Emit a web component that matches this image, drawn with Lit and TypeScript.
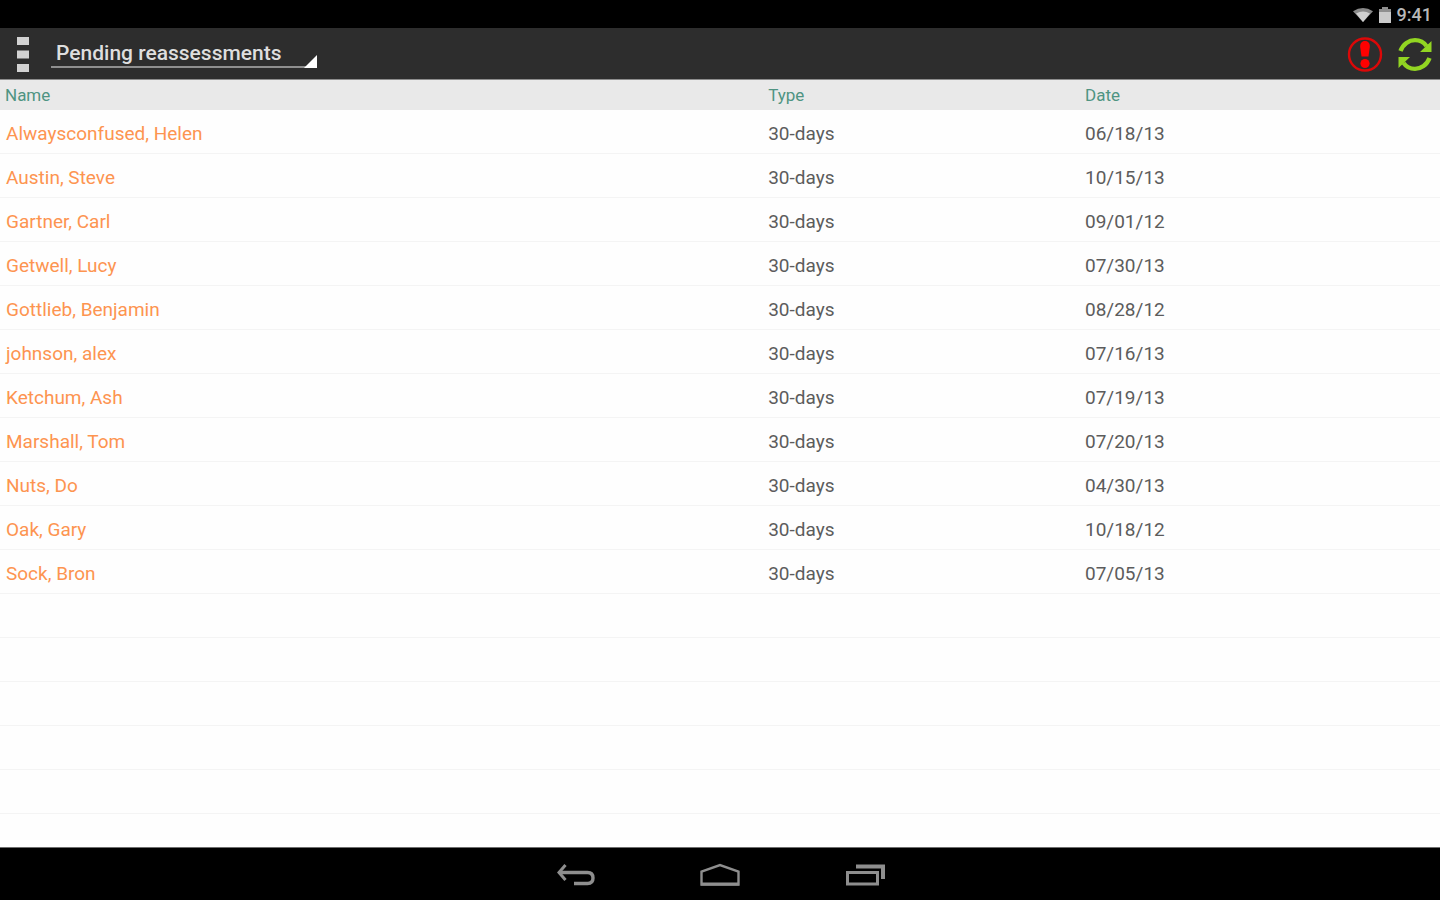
import { LitElement, html, css } from "lit";
import { customElement, state } from "lit/decorators.js";

interface Assessment {
  name: string;
  type: string;
  date: string;
}

const ROWS: Assessment[] = [
  { name: "Alwaysconfused, Helen", type: "30-days", date: "06/18/13" },
  { name: "Austin, Steve", type: "30-days", date: "10/15/13" },
  { name: "Gartner, Carl", type: "30-days", date: "09/01/12" },
  { name: "Getwell, Lucy", type: "30-days", date: "07/30/13" },
  { name: "Gottlieb, Benjamin", type: "30-days", date: "08/28/12" },
  { name: "johnson, alex", type: "30-days", date: "07/16/13" },
  { name: "Ketchum, Ash", type: "30-days", date: "07/19/13" },
  { name: "Marshall, Tom", type: "30-days", date: "07/20/13" },
  { name: "Nuts, Do", type: "30-days", date: "04/30/13" },
  { name: "Oak, Gary", type: "30-days", date: "10/18/12" },
  { name: "Sock, Bron", type: "30-days", date: "07/05/13" },
];

@customElement("status-bar")
export class StatusBar extends LitElement {
  static styles = css`
    :host {
      display: flex;
      align-items: center;
      justify-content: flex-end;
      gap: 5px;
      height: 28px;
      padding: 2px 8px 0 0;
      box-sizing: border-box;
      background: #000;
      color: #b8b8b8;
      font-size: 18px;
      font-weight: 500;
      line-height: 24px;
    }
    svg {
      display: block;
    }
  `;

  render() {
    return html`
      <svg width="20" height="14" viewBox="0 0 20 14" aria-hidden="true">
        <path d="M0 3.200Q10-3 20 3.200L10 14Z" fill="#8a8a8a" />
        <path d="M3 5.500Q10 1.500 17 5.500L10 14Z" fill="#d0d0d0" />
      </svg>
      <svg width="14" height="16" viewBox="0 0 14 16" aria-hidden="true">
        <path d="M4 0h6v2h3v14H1V2h3z" fill="#8f8f8f" />
        <path d="M1 5h12v11H1z" fill="#cacaca" />
      </svg>
      <span>9:41</span>
    `;
  }
}

@customElement("action-bar")
export class ActionBar extends LitElement {
  static styles = css`
    :host {
      display: flex;
      align-items: center;
      height: 52px;
      box-sizing: border-box;
      border-bottom: 1px solid #8c8c8c;
      background: #2d2d2d;
    }
    button {
      display: grid;
      place-items: center;
      padding: 0;
      border: 0;
      background: none;
      height: 50px;
      width: 50px;
      cursor: pointer;
    }
    .menu {
      width: 45px;
    }
    .picker {
      position: relative;
      display: block;
      margin-left: 6px;
    }
    .picker select {
      display: block;
      appearance: none;
      width: 266px;
      height: 28px;
      padding: 0 24px 0 5px;
      border: 0;
      border-bottom: 2px solid #8f8f8f;
      border-radius: 0;
      background: transparent;
      color: #dedede;
      font: inherit;
      font-size: 21px;
      font-weight: 500;
      line-height: 26px;
    }
    .picker option {
      color: #222;
    }
    .corner {
      position: absolute;
      right: 0;
      bottom: 0;
      pointer-events: none;
    }
    .spacer {
      flex: 1;
    }
    svg {
      display: block;
    }
  `;

  render() {
    return html`
      <button class="menu" aria-label="Menu">
        <svg width="12" height="36" viewBox="0 0 12 36">
          <path d="M0 1h12v8H0zM0 14.500h12v8H0zM0 28h12v8H0z" fill="#d2d2d2" />
        </svg>
      </button>
      <div class="picker">
        <select aria-label="View">
          <option>Pending reassessments</option>
          <option>Pending assessments</option>
        </select>
        <svg class="corner" width="13" height="13" viewBox="0 0 13 13" aria-hidden="true">
          <path d="M13 0v13H0z" fill="#fff" />
        </svg>
      </div>
      <span class="spacer"></span>
      <button aria-label="Alerts">
        <svg width="36" height="36" viewBox="0 0 36 36">
          <circle cx="18" cy="18.500" r="16" fill="none" stroke="#dc0808" stroke-width="2.400" />
          <path d="M18 5c3.400 0 5 2.500 4.800 6L21.500 20.500h-7L13.200 11c-.2-3.500 1.400-6 4.800-6z" fill="#ff0000" />
          <circle cx="18" cy="27.500" r="4.600" fill="#ff0000" />
        </svg>
      </button>
      <button aria-label="Refresh">
        <svg width="36" height="36" viewBox="0 0 36 36">
          <g fill="none" stroke="#92d522" stroke-width="4.400">
            <path d="M3.500 15C6 8 12 4.100 18 4.100c5 0 9 2.200 11.500 6" />
            <path d="M32.500 22C30 29 24 32.900 18 32.900c-5 0-9-2.200-11.500-6" />
          </g>
          <path d="M34.500 5V16H23zM1.500 32V21H13z" fill="#92d522" />
        </svg>
      </button>
    `;
  }
}

@customElement("assessment-table")
export class AssessmentTable extends LitElement {
  @state() private rows = ROWS;

  static styles = css`
    :host {
      display: block;
      overflow: hidden;
      background: repeating-linear-gradient(#fefefe 0 43px, #f4f4f4 43px 44px) 0 30px no-repeat;
    }
    table {
      width: 100%;
      border-collapse: collapse;
      table-layout: fixed;
      color: #5c5c5c;
      font-size: 19px;
      line-height: 24px;
    }
    th {
      height: 30px;
      background: #e9e9e9;
      color: #4f9482;
      font-size: 17px;
      font-weight: 400;
      text-align: left;
    }
    th,
    td {
      box-sizing: border-box;
      padding: 0 5px;
    }
    td {
      height: 44px;
      padding-top: 3px;
    }
    td:first-child {
      padding-left: 6px;
    }
    .name {
      width: 53%;
    }
    .type {
      width: 22%;
    }
    a {
      color: #fd9450;
      text-decoration: none;
    }
  `;

  render() {
    return html`
      <table>
        <thead>
          <tr>
            <th class="name" scope="col">Name</th>
            <th class="type" scope="col">Type</th>
            <th scope="col">Date</th>
          </tr>
        </thead>
        <tbody>
          ${this.rows.map(
            (r) => html`<tr>
              <td><a href="#">${r.name}</a></td>
              <td>${r.type}</td>
              <td>${r.date}</td>
            </tr>`
          )}
        </tbody>
      </table>
    `;
  }
}

@customElement("system-nav")
export class SystemNav extends LitElement {
  static styles = css`
    :host {
      display: flex;
      justify-content: center;
      height: 53px;
      box-sizing: border-box;
      border-top: 1px solid #6e6e6e;
      background: #000;
    }
    button {
      display: grid;
      place-items: center;
      width: 145px;
      padding: 2px 0 0;
      border: 0;
      background: none;
      cursor: pointer;
    }
    svg {
      display: block;
      fill: none;
      stroke: #8e8e8e;
      stroke-width: 3;
    }
  `;

  render() {
    return html`
      <button aria-label="Back">
        <svg width="40" height="24" viewBox="0 0 40 24">
          <path d="M5 9.500H32.500Q38 9.500 38 15T32.500 20.500H19" stroke-width="3.400" />
          <path d="M10.500 2L4 9.500L10.500 17" />
        </svg>
      </button>
      <button aria-label="Home">
        <svg width="40" height="24" viewBox="0 0 40 24">
          <path d="M1.500 21.500V8.500L20 2L38.500 8.500V21.500Z" stroke-width="2.400" />
          <path d="M1 21h38" />
        </svg>
      </button>
      <button aria-label="Recent apps">
        <svg width="40" height="24" viewBox="0 0 40 24">
          <path d="M2.500 9.500H32.500V21H2.500Z" stroke-width="3" />
          <path d="M11 3.500H38V16" stroke-width="4" />
        </svg>
      </button>
    `;
  }
}

@customElement("app-root")
export class AppRoot extends LitElement {
  static styles = css`
    :host {
      display: flex;
      flex-direction: column;
      min-height: 100vh;
      background: #fefefe;
      font-family: Roboto, "Noto Sans", sans-serif;
    }
    .content {
      flex: 1;
    }
  `;

  render() {
    return html`
      <status-bar></status-bar>
      <action-bar></action-bar>
      <assessment-table class="content"></assessment-table>
      <system-nav></system-nav>
    `;
  }
}
